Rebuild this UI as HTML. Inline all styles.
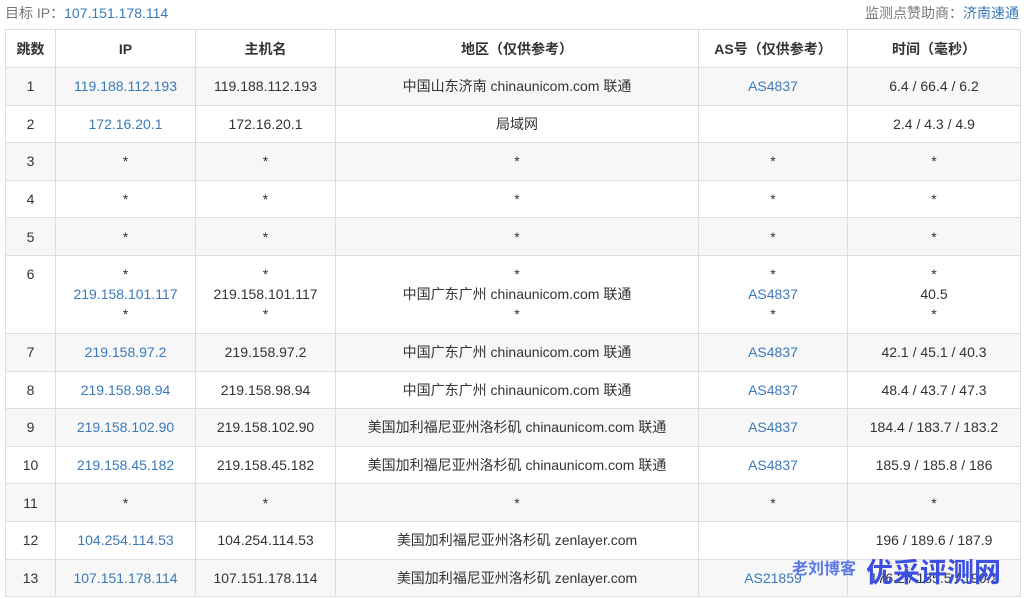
<!DOCTYPE html>
<html><head><meta charset="utf-8"><style>
body{margin:0;background:#fff;font-family:"Liberation Sans","Noto Sans CJK SC",sans-serif;font-size:14px;color:#333;width:1024px;height:599px;overflow:hidden;position:relative}
.top{position:absolute;top:3px;font-size:14px;color:#777}
a{color:#3a7ab8;text-decoration:none}
table{position:absolute;left:5px;top:29px;width:1016px;border-collapse:collapse;table-layout:fixed}
td,th{border:1px solid #ddd;text-align:center;padding:0;line-height:20px}
th{font-weight:bold;font-size:14px}
tr{height:37.6px}
tr.h{height:38px}
tr.t{height:78px}
tr:nth-child(even) td{background:#f7f7f7}
.wm{position:absolute;font-weight:bold;color:#3b50e0}
</style></head><body>
<div class="top" style="left:5px">目标 IP：<a>107.151.178.114</a></div>
<div class="top" style="right:5px">监测点赞助商：<a>济南速通</a></div>
<table>
<colgroup><col style="width:50px"><col style="width:140px"><col style="width:140px"><col style="width:363px"><col style="width:149px"><col></colgroup>
<tr class="h"><th>跳数</th><th>IP</th><th>主机名</th><th>地区（仅供参考）</th><th>AS号（仅供参考）</th><th>时间（毫秒）</th></tr>
<tr><td>1</td><td><a>119.188.112.193</a></td><td>119.188.112.193</td><td>中国山东济南 chinaunicom.com 联通</td><td><a>AS4837</a></td><td>6.4 / 66.4 / 6.2</td></tr>
<tr><td>2</td><td><a>172.16.20.1</a></td><td>172.16.20.1</td><td>局域网</td><td></td><td>2.4 / 4.3 / 4.9</td></tr>
<tr><td>3</td><td>*</td><td>*</td><td>*</td><td>*</td><td>*</td></tr>
<tr><td>4</td><td>*</td><td>*</td><td>*</td><td>*</td><td>*</td></tr>
<tr><td>5</td><td>*</td><td>*</td><td>*</td><td>*</td><td>*</td></tr>
<tr class="t"><td style="vertical-align:top;padding-top:8px">6</td><td>*<br><a>219.158.101.117</a><br>*</td><td>*<br>219.158.101.117<br>*</td><td>*<br>中国广东广州 chinaunicom.com 联通<br>*</td><td>*<br><a>AS4837</a><br>*</td><td>*<br>40.5<br>*</td></tr>
<tr><td>7</td><td><a>219.158.97.2</a></td><td>219.158.97.2</td><td>中国广东广州 chinaunicom.com 联通</td><td><a>AS4837</a></td><td>42.1 / 45.1 / 40.3</td></tr>
<tr><td>8</td><td><a>219.158.98.94</a></td><td>219.158.98.94</td><td>中国广东广州 chinaunicom.com 联通</td><td><a>AS4837</a></td><td>48.4 / 43.7 / 47.3</td></tr>
<tr><td>9</td><td><a>219.158.102.90</a></td><td>219.158.102.90</td><td>美国加利福尼亚州洛杉矶 chinaunicom.com 联通</td><td><a>AS4837</a></td><td>184.4 / 183.7 / 183.2</td></tr>
<tr><td>10</td><td><a>219.158.45.182</a></td><td>219.158.45.182</td><td>美国加利福尼亚州洛杉矶 chinaunicom.com 联通</td><td><a>AS4837</a></td><td>185.9 / 185.8 / 186</td></tr>
<tr><td>11</td><td>*</td><td>*</td><td>*</td><td>*</td><td>*</td></tr>
<tr><td>12</td><td><a>104.254.114.53</a></td><td>104.254.114.53</td><td>美国加利福尼亚州洛杉矶 zenlayer.com</td><td></td><td>196 / 189.6 / 187.9</td></tr>
<tr><td>13</td><td><a>107.151.178.114</a></td><td>107.151.178.114</td><td>美国加利福尼亚州洛杉矶 zenlayer.com</td><td><a>AS21859</a></td><td>176.2 / 185.5 / 190.2</td></tr>
</table>
<div class="wm" style="left:792px;top:555px;font-size:16px;color:#5a78e8">老刘博客</div>
<div class="wm" style="left:866px;top:558px;font-size:27px;line-height:30px">优采评测网</div>
</body></html>
